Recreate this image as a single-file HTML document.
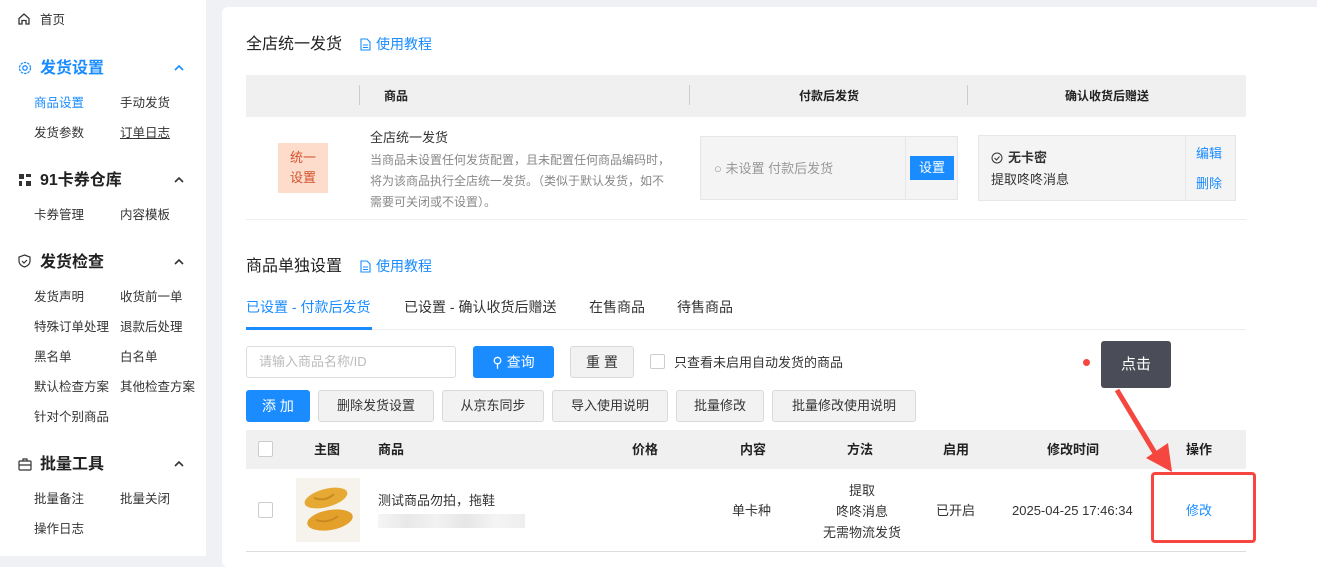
<!DOCTYPE html>
<html><head><meta charset="utf-8"><style>
*{margin:0;padding:0;box-sizing:border-box}
body{width:1317px;height:556px;overflow:hidden;background:#f0f1f5;font-family:"Liberation Sans","Noto Sans CJK SC",sans-serif;color:#333;position:relative;font-size:13px}
.a{position:absolute;white-space:nowrap;line-height:1.2}
#side{position:absolute;left:0;top:0;width:206px;height:556px;background:#fff}
.h{font-size:16px;font-weight:bold;color:#222}
.s{font-size:12.5px;color:#333}
#card{position:absolute;left:222px;top:7px;width:1100px;height:560px;background:#fff;border-radius:6px}
.blue{color:#1a8cff}
.btn{position:absolute;height:32px;border:1px solid #d9d9d9;background:#f2f2f2;border-radius:3px;font-size:13px;line-height:30px;text-align:center;color:#333}
.th{font-weight:bold;font-size:13px;color:#222}
.cv{position:absolute;left:174px;width:10px;height:6px}
</style></head><body>
<div id="side">
<svg class="a" style="left:17px;top:12px" width="14" height="14" viewBox="0 0 14 14"><path d="M2 6.5L7 2l5 4.5V12H9V8.5H5V12H2z" fill="none" stroke="#333" stroke-width="1.3"/></svg>
<div class="a s" style="left:40px;top:13px">首页</div>
<svg class="a" style="left:18px;top:61px" width="14" height="14" viewBox="0 0 14 14"><circle cx="7" cy="7" r="5.5" fill="none" stroke="#1a8cff" stroke-width="1.3" stroke-dasharray="2.5 1"/><circle cx="7" cy="7" r="2.2" fill="none" stroke="#1a8cff" stroke-width="1.3"/></svg>
<div class="a h" style="left:40px;top:59px;color:#1a8cff">发货设置</div>
<svg class="cv" style="top:65px" viewBox="0 0 10 6"><path d="M1 5l4-4 4 4" fill="none" stroke="#1a8cff" stroke-width="1.6"/></svg>
<div class="a s blue" style="left:34px;top:96px">商品设置</div>
<div class="a s" style="left:120px;top:96px">手动发货</div>
<div class="a s" style="left:34px;top:126px">发货参数</div>
<div class="a s" style="left:120px;top:126px;text-decoration:underline">订单日志</div>
<svg class="a" style="left:18px;top:173px" width="14" height="14" viewBox="0 0 14 14"><path d="M1 1h5v5H1zM8 8h5v5H8zM8 1h5v3H8zM1 8h3v5H1z" fill="#333"/></svg>
<div class="a h" style="left:40px;top:171px">91卡券仓库</div>
<svg class="cv" style="top:177px" viewBox="0 0 10 6"><path d="M1 5l4-4 4 4" fill="none" stroke="#333" stroke-width="1.6"/></svg>
<div class="a s" style="left:34px;top:208px">卡券管理</div>
<div class="a s" style="left:120px;top:208px">内容模板</div>
<svg class="a" style="left:18px;top:254px" width="13" height="14" viewBox="0 0 13 14"><path d="M6.5 1L12 3v4c0 3-2.5 5-5.5 6C3.5 12 1 10 1 7V3z" fill="none" stroke="#333" stroke-width="1.2"/><path d="M4 7l2 2 3-3" fill="none" stroke="#333" stroke-width="1.2"/></svg>
<div class="a h" style="left:40px;top:253px">发货检查</div>
<svg class="cv" style="top:259px" viewBox="0 0 10 6"><path d="M1 5l4-4 4 4" fill="none" stroke="#333" stroke-width="1.6"/></svg>
<div class="a s" style="left:34px;top:290px">发货声明</div><div class="a s" style="left:120px;top:290px">收货前一单</div>
<div class="a s" style="left:34px;top:320px">特殊订单处理</div><div class="a s" style="left:120px;top:320px">退款后处理</div>
<div class="a s" style="left:34px;top:350px">黑名单</div><div class="a s" style="left:120px;top:350px">白名单</div>
<div class="a s" style="left:34px;top:380px">默认检查方案</div><div class="a s" style="left:120px;top:380px">其他检查方案</div>
<div class="a s" style="left:34px;top:410px">针对个别商品</div>
<svg class="a" style="left:18px;top:458px" width="14" height="13" viewBox="0 0 14 13"><rect x="1" y="3" width="12" height="9" rx="1" fill="none" stroke="#333" stroke-width="1.2"/><path d="M5 3V1h4v2M1 7h12" fill="none" stroke="#333" stroke-width="1.2"/></svg>
<div class="a h" style="left:40px;top:455px">批量工具</div>
<svg class="cv" style="top:461px" viewBox="0 0 10 6"><path d="M1 5l4-4 4 4" fill="none" stroke="#333" stroke-width="1.6"/></svg>
<div class="a s" style="left:34px;top:492px">批量备注</div><div class="a s" style="left:120px;top:492px">批量关闭</div>
<div class="a s" style="left:34px;top:522px">操作日志</div>
</div>
<div id="card"></div>
<div class="a" style="left:246px;top:35px;font-size:16px;color:#222">全店统一发货</div>
<svg class="a" style="left:360px;top:38px" width="11" height="13" viewBox="0 0 11 13"><path d="M1 1h6l3 3v8H1z M3 7h5M3 9.5h5" fill="none" stroke="#1a8cff" stroke-width="1.1"/></svg>
<div class="a blue" style="left:376px;top:36px;font-size:14px">使用教程</div>
<div class="a" style="left:246px;top:75px;width:1000px;height:42px;background:#f0f0f0"></div>
<div class="a" style="left:359px;top:85px;width:1px;height:20px;background:#ccc"></div>
<div class="a" style="left:689px;top:85px;width:1px;height:20px;background:#ccc"></div>
<div class="a" style="left:967px;top:85px;width:1px;height:20px;background:#ccc"></div>
<div class="a th" style="left:384px;top:89px;font-size:12px">商品</div>
<div class="a th" style="left:799px;top:89px;font-size:12px">付款后发货</div>
<div class="a th" style="left:1065px;top:89px;font-size:12px">确认收货后赠送</div>
<div class="a" style="left:278px;top:143px;width:50px;height:50px;background:#fddccb;color:#d2532d;font-size:13px;text-align:center;line-height:20px;padding-top:5px">统一<br>设置</div>
<div class="a" style="left:370px;top:130px;font-size:13px">全店统一发货</div>
<div class="a" style="left:370px;top:150px;font-size:12px;color:#888;line-height:21px;white-space:normal;width:305px">当商品未设置任何发货配置，且未配置任何商品编码时，将为该商品执行全店统一发货。（类似于默认发货，如不需要可关闭或不设置）。</div>
<div class="a" style="left:700px;top:136px;width:258px;height:64px;background:#f4f4f4;border:1px solid #e6e6e6"></div>
<div class="a" style="left:905px;top:137px;width:1px;height:62px;background:#e6e6e6"></div>
<div class="a" style="left:714px;top:161px;color:#999;font-size:13px">○ 未设置 付款后发货</div>
<div class="a" style="left:910px;top:156px;width:44px;height:24px;background:#1a8cff;color:#fff;text-align:center;line-height:24px;font-size:13px">设置</div>
<div class="a" style="left:978px;top:135px;width:258px;height:66px;background:#f4f4f4;border:1px solid #e6e6e6"></div>
<div class="a" style="left:1185px;top:136px;width:1px;height:64px;background:#e6e6e6"></div>
<svg class="a" style="left:991px;top:152px" width="12" height="12" viewBox="0 0 12 12"><circle cx="6" cy="6" r="5" fill="none" stroke="#333" stroke-width="1"/><path d="M3.5 6l2 2 3-3.5" fill="none" stroke="#333" stroke-width="1"/></svg>
<div class="a" style="left:1008px;top:150px;font-size:13px;font-weight:bold">无卡密</div>
<div class="a" style="left:991px;top:172px;font-size:13px">提取咚咚消息</div>
<div class="a blue" style="left:1196px;top:146px">编辑</div>
<div class="a blue" style="left:1196px;top:176px">删除</div>
<div class="a" style="left:246px;top:219px;width:1000px;height:1px;background:#eee"></div>
<div class="a" style="left:246px;top:257px;font-size:16px;color:#222">商品单独设置</div>
<svg class="a" style="left:360px;top:260px" width="11" height="13" viewBox="0 0 11 13"><path d="M1 1h6l3 3v8H1z M3 7h5M3 9.5h5" fill="none" stroke="#1a8cff" stroke-width="1.1"/></svg>
<div class="a blue" style="left:376px;top:258px;font-size:14px">使用教程</div>
<div class="a blue" style="left:246px;top:299px;font-size:14px">已设置 - 付款后发货</div>
<div class="a" style="left:404px;top:299px;font-size:14px">已设置 - 确认收货后赠送</div>
<div class="a" style="left:589px;top:299px;font-size:14px">在售商品</div>
<div class="a" style="left:677px;top:299px;font-size:14px">待售商品</div>
<div class="a" style="left:246px;top:329px;width:1000px;height:1px;background:#eee"></div>
<div class="a" style="left:246px;top:327px;width:126px;height:3px;background:#1a8cff"></div>
<div class="a" style="left:246px;top:346px;width:210px;height:32px;border:1px solid #ddd;border-radius:3px;color:#bbb;padding-left:12px;line-height:30px">请输入商品名称/ID</div>
<div class="a" style="left:473px;top:346px;width:81px;height:32px;background:#1a8cff;border-radius:3px;color:#fff;text-align:center;line-height:32px;font-size:14px">⚲ 查询</div>
<div class="btn" style="left:570px;top:346px;width:64px;font-size:14px">重 置</div>
<div class="a" style="left:650px;top:354px;width:15px;height:15px;border:1px solid #ccc;border-radius:2px;background:#fff"></div>
<div class="a" style="left:674px;top:355px">只查看未启用自动发货的商品</div>
<div class="a" style="left:1083px;top:359px;width:7px;height:7px;border-radius:50%;background:#f5463f"></div>
<div class="a" style="left:1101px;top:341px;width:70px;height:47px;background:#4a4c58;border-radius:3px;color:#fff;font-size:15px;text-align:center;line-height:47px">点击</div>
<div class="a" style="left:246px;top:390px;width:64px;height:32px;background:#1a8cff;border-radius:3px;color:#fff;text-align:center;line-height:32px;font-size:14px">添 加</div>
<div class="btn" style="left:318px;top:390px;width:116px">删除发货设置</div>
<div class="btn" style="left:442px;top:390px;width:102px">从京东同步</div>
<div class="btn" style="left:552px;top:390px;width:116px">导入使用说明</div>
<div class="btn" style="left:676px;top:390px;width:88px">批量修改</div>
<div class="btn" style="left:772px;top:390px;width:144px">批量修改使用说明</div>
<div class="a" style="left:246px;top:430px;width:1000px;height:39px;background:#f0f0f0"></div>
<div class="a" style="left:258px;top:441px;width:15px;height:16px;border:1px solid #ccc;background:#fff;border-radius:2px"></div>
<div class="a th" style="left:314px;top:442px">主图</div>
<div class="a th" style="left:378px;top:442px">商品</div>
<div class="a th" style="left:632px;top:442px">价格</div>
<div class="a th" style="left:740px;top:442px">内容</div>
<div class="a th" style="left:847px;top:442px">方法</div>
<div class="a th" style="left:943px;top:442px">启用</div>
<div class="a th" style="left:1047px;top:442px">修改时间</div>
<div class="a th" style="left:1186px;top:442px">操作</div>
<div class="a" style="left:258px;top:502px;width:15px;height:16px;border:1px solid #ccc;border-radius:2px"></div>
<div class="a" style="left:296px;top:478px;width:64px;height:64px;background:#f6f2ec"></div>
<svg class="a" style="left:300px;top:484px" width="56" height="52" viewBox="0 0 56 52"><ellipse cx="26" cy="14" rx="22" ry="9" fill="#e6a934" transform="rotate(-15 26 14)"/><ellipse cx="30" cy="36" rx="23" ry="10" fill="#e3a12c" transform="rotate(-10 30 36)"/><path d="M14 14q12 4 20-4M16 36q12 4 22-4" stroke="#c98a1f" stroke-width="2" fill="none"/></svg>
<div class="a" style="left:378px;top:493px">测试商品勿拍，拖鞋</div>
<div class="a" style="left:378px;top:514px;width:147px;height:14px;background:linear-gradient(90deg,#f5f5f5,#e8e8e8 20%,#f2f2f2 40%,#e6e6e6 60%,#f4f4f4 80%,#eee)"></div>
<div class="a" style="left:732px;top:503px">单卡种</div>
<div class="a" style="left:819px;top:480px;line-height:21px;text-align:center;width:86px">提取<br>咚咚消息<br>无需物流发货</div>
<div class="a" style="left:936px;top:503px">已开启</div>
<div class="a" style="left:1012px;top:503px">2025-04-25 17:46:34</div>
<div class="a blue" style="left:1186px;top:503px">修改</div>
<div class="a" style="left:246px;top:551px;width:1000px;height:1px;background:#ddd"></div>
<div class="a" style="left:1151px;top:472px;width:105px;height:71px;border:3px solid #f5463f;border-radius:4px"></div>
<svg class="a" style="left:1100px;top:380px" width="90" height="100" viewBox="0 0 90 100"><path d="M17 10L58 78" stroke="#f5463f" stroke-width="5"/><path d="M46 78L72 92 68 63z" fill="#f5463f"/></svg>
</body></html>
